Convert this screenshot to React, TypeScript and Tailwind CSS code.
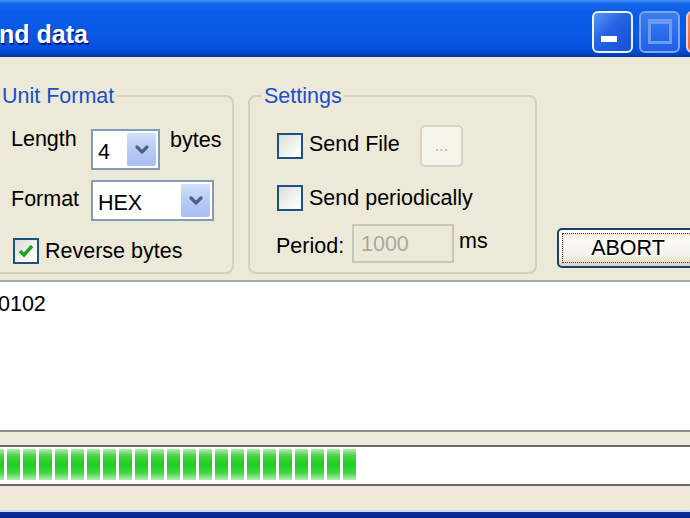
import React from "react"

const font = "font-['Tahoma','Liberation_Sans',sans-serif]"

const Chevron = () => (
  <svg width="16" height="12" viewBox="0 0 16 12">
    <path d="M3 3 L8 8 L13 3" fill="none" stroke="#4d6185" strokeWidth="3.2" strokeLinecap="round" strokeLinejoin="round" />
  </svg>
)

const Combo = ({ value, width }: { value: string; width: string }) => (
  <div className={`flex h-[41px] ${width} shrink-0 items-stretch border-2 border-[#7f9db9] bg-white`}>
    <span className="flex flex-1 items-center pl-[5px] pt-[4px] text-black">{value}</span>
    <span className="m-[1px] flex w-[31px] items-center justify-center rounded-[3px] border border-white bg-[linear-gradient(to_bottom,#d2def9,#b4c8f6_60%,#a9bff2)]">
      <Chevron />
    </span>
  </div>
)

const CheckBox = ({ checked }: { checked?: boolean }) => (
  <span className="flex h-[26px] w-[26px] shrink-0 items-center justify-center border-2 border-[#1c5180] bg-[linear-gradient(135deg,#dcdcd5,#f4f4f0_60%,#ffffff)]">
    {checked && (
      <svg width="18" height="18" viewBox="0 0 18 18">
        <path d="M3 9 L7 13 L15 4" fill="none" stroke="#21a121" strokeWidth="3.4" />
      </svg>
    )}
  </span>
)

const TitleButton = ({ children, dim }: { children: React.ReactNode; dim?: boolean }) => (
  <div
    className={`flex h-[42px] w-[41px] shrink-0 items-center justify-center rounded-[6px] border-2 ${
      dim ? "border-[#7fa5ef] bg-[linear-gradient(to_bottom,#3a7ff0,#1f5ee6)]" : "border-[#eef4ff] bg-[linear-gradient(135deg,#5a95f7,#2461e3_45%,#1a4fd6)]"
    }`}
  >
    {children}
  </div>
)

export default function App() {
  const blocks = Array.from({ length: 23 }, (_, i) => i)

  return (
    <div className={`${font} flex h-[518px] w-[690px] flex-col overflow-hidden bg-[#ece9d8] text-[21.5px] leading-[26px] text-black`}>
      {/* title bar */}
      <div className="flex h-[57px] shrink-0 items-center bg-[linear-gradient(to_bottom,#4d94f8_0%,#1569ec_6%,#0a5de8_20%,#0858e6_60%,#0652de_85%,#0042c4_95%,#0035a4_100%)]">
        <span className="ml-[-1px] mt-[10px] font-['Liberation_Sans',sans-serif] text-[25px] font-bold text-white [text-shadow:1px_2px_#0a1a7a]">
          nd data
        </span>
        <div className="ml-auto mr-[-37px] flex shrink-0 gap-[6px] pt-[6px]">
          <TitleButton>
            <span className="mb-[-14px] mr-[8px] h-[6px] w-[16px] bg-white" />
          </TitleButton>
          <TitleButton dim>
            <span className="h-[25px] w-[24px] border-[3px] border-t-[5px] border-[#6f9bee]" />
          </TitleButton>
          <div className="h-[42px] w-[41px] shrink-0 rounded-[6px] border-2 border-[#f2d0c4] bg-[linear-gradient(135deg,#f08a62,#dd4f2a)]" />
        </div>
      </div>

      {/* options */}
      <div className="flex h-[223px] shrink-0 items-start pt-[26px]">
        <fieldset className="ml-[-10px] h-[191px] w-[244px] shrink-0 rounded-[8px] border-2 border-[#d3d0bd]">
          <legend className="ml-[8px] px-[2px] text-[#1a4fc8]">Unit Format</legend>
          <div className="flex flex-col pl-[19px]">
            <div className="mt-[20px] flex h-[41px] items-center">
              <span className="w-[80px] pb-[22px]">Length</span>
              <Combo value="4" width="w-[69px]" />
              <span className="ml-[10px] pb-[20px]">bytes</span>
            </div>
            <div className="mt-[10px] flex h-[41px] items-center">
              <span className="w-[80px] pb-[4px]">Format</span>
              <Combo value="HEX" width="w-[123px]" />
            </div>
            <div className="ml-[2px] mt-[17px] flex h-[26px] items-center">
              <CheckBox checked />
              <span className="ml-[6px]">Reverse bytes</span>
            </div>
          </div>
        </fieldset>

        <fieldset className="ml-[14px] h-[191px] w-[289px] shrink-0 rounded-[8px] border-2 border-[#d3d0bd]">
          <legend className="ml-[12px] px-[2px] text-[#1a4fc8]">Settings</legend>
          <div className="flex flex-col pl-[27px]">
            <div className="mt-[16px] flex h-[42px] items-center">
              <CheckBox />
              <span className="ml-[6px] w-[111px] pb-[4px]">Send File</span>
              <span className="flex h-[42px] w-[43px] items-center justify-center rounded-[5px] border-2 border-[#d6d3c4] bg-[#f5f4ea] text-[16px] text-[#aca899]">
                ...
              </span>
            </div>
            <div className="mt-[18px] flex h-[26px] items-center">
              <CheckBox />
              <span className="ml-[6px]">Send periodically</span>
            </div>
            <div className="mt-[13px] flex h-[39px] items-center">
              <span className="ml-[-1px] w-[76px] pt-[4px]">Period:</span>
              <span className="flex h-[39px] w-[102px] items-center border-2 border-[#c9c7ba] pl-[7px] text-[#aca899]">1000</span>
              <span className="ml-[5px] pb-[6px]">ms</span>
            </div>
          </div>
        </fieldset>

        <div className="ml-[20px] mt-[145px] flex h-[40px] w-[150px] shrink-0 items-center justify-center rounded-[5px] border-2 border-[#1d3e6e] bg-[linear-gradient(to_bottom,#ffffff,#f3f2ec_70%,#d8d5c8)] p-[3px]">
          <span className="flex h-full w-full items-center justify-center border border-dotted border-[#333] pr-[8px] shadow-[inset_0_0_0_1px_#f5e6a0]">
            ABORT
          </span>
        </div>
      </div>

      {/* data text */}
      <div className="h-[150px] shrink-0 border-t-2 border-[#a5abb8] bg-white pt-[9px]">
        <span className="ml-[-2px]">0102</span>
      </div>
      <div className="h-[2px] shrink-0 bg-[#8c8c86]" />

      {/* progress */}
      <div className="mt-[13px] flex h-[41px] shrink-0 flex-col border-y-2 border-[#6a6a66] bg-white">
        <div className="ml-[-9px] mt-[2px] flex h-[31px] gap-[3px]">
          {blocks.map((b) => (
            <span
              key={b}
              className="h-full w-[13px] shrink-0 bg-[linear-gradient(to_bottom,#b4ecb4,#44d644_22%,#1fcf1f_50%,#44d644_78%,#b4ecb4)]"
            />
          ))}
        </div>
      </div>

      <div className="h-[24px] shrink-0 bg-[linear-gradient(to_bottom,#f4e6dc,#ece9d8)]" />
      <div className="h-[2px] shrink-0 bg-[#c9dcf5]" />
      <div className="flex-1 bg-[linear-gradient(to_bottom,#0b2c9e,#06238a)]" />
    </div>
  )
}
